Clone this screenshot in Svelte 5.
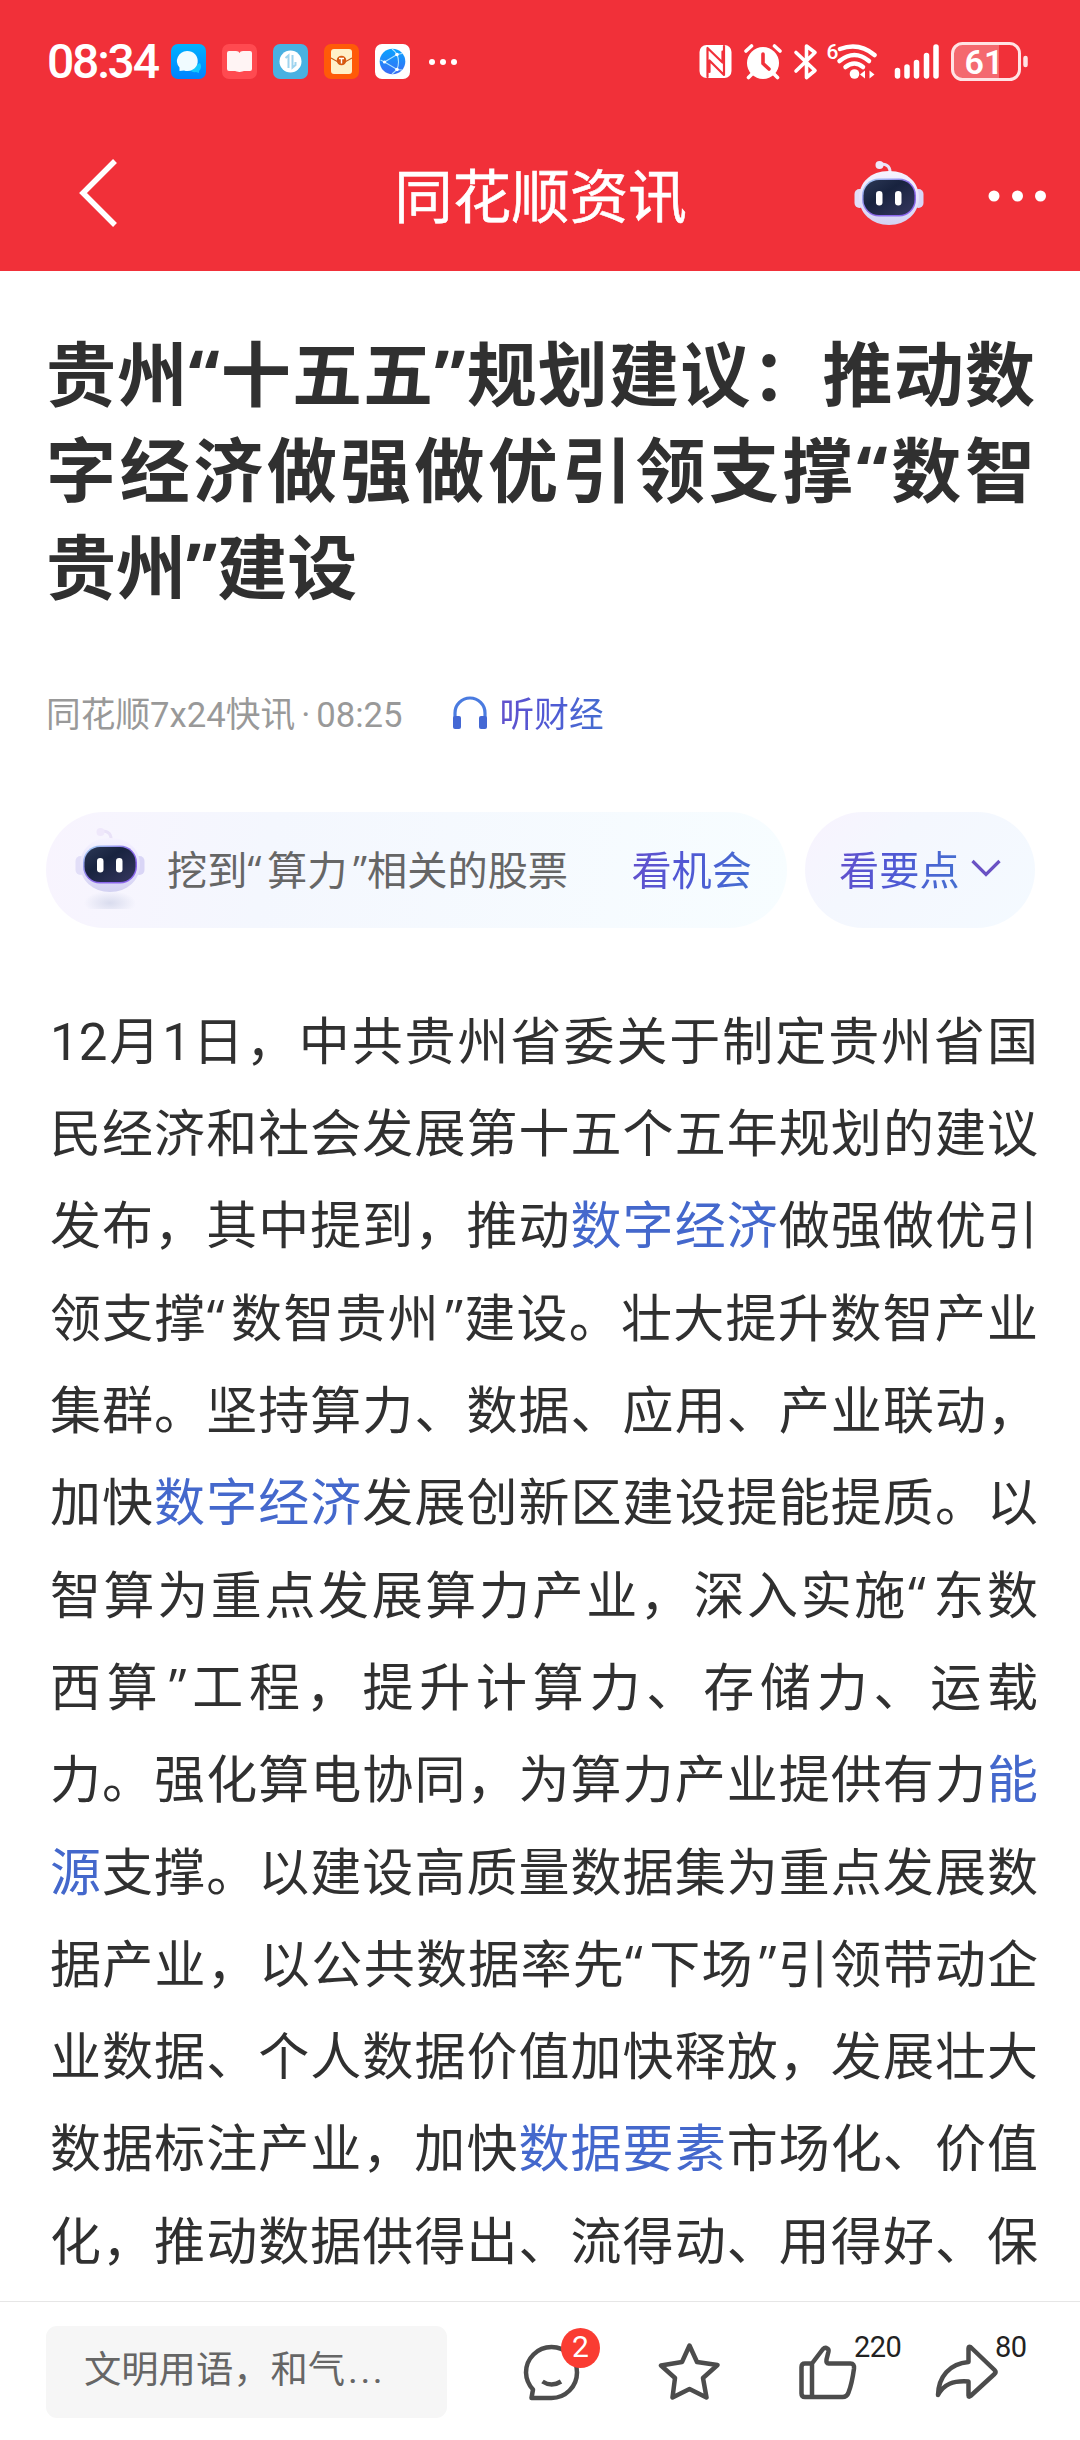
<script lang="ts">
	const title = ['贵州“十五五”规划建议：推动数', '字经济做强做优引领支撑“数智', '贵州”建设'];

	// [text] wrapped in brackets is a topic link
	const lines = [
		'12月1日，中共贵州省委关于制定贵州省国',
		'民经济和社会发展第十五个五年规划的建议',
		'发布，其中提到，推动[数字经济]做强做优引',
		'领支撑“数智贵州”建设。壮大提升数智产业',
		'集群。坚持算力、数据、应用、产业联动，',
		'加快[数字经济]发展创新区建设提能提质。以',
		'智算为重点发展算力产业，深入实施“东数',
		'西算”工程，提升计算力、存储力、运载',
		'力。强化算电协同，为算力产业提供有力[能]',
		'[源]支撑。以建设高质量数据集为重点发展数',
		'据产业，以公共数据率先“下场”引领带动企',
		'业数据、个人数据价值加快释放，发展壮大',
		'数据标注产业，加快[数据要素]市场化、价值',
		'化，推动数据供得出、流得动、用得好、保'
	];

	const parts = (line: string) => line.split(/[\[\]]/).map((text, i) => ({ text, link: i % 2 === 1 }));
</script>

{#snippet quoted(text: string)}
	{#each text.split(/([“”])/) as bit}{#if bit === '“'}<span class="open">“</span>{:else if bit === '”'}<span class="close">”</span>{:else}{bit}{/if}{/each}
{/snippet}

{#snippet robot(id: string)}
	<svg class="robot" viewBox="0 0 70 68" width="70" height="68">
		<defs>
			<linearGradient id="{id}-head" x1="0" y1="0" x2="0" y2="1">
				<stop offset="0" stop-color="#f6f3ff" />
				<stop offset="0.6" stop-color="#e3dffa" />
				<stop offset="1" stop-color="#d3d2f2" />
			</linearGradient>
			<linearGradient id="{id}-rim" x1="0" y1="0" x2="1" y2="1">
				<stop offset="0" stop-color="#a9dcf5" />
				<stop offset="0.5" stop-color="#8b6be8" />
				<stop offset="1" stop-color="#8a63ee" />
			</linearGradient>
			<linearGradient id="{id}-face" x1="0" y1="0" x2="1" y2="1">
				<stop offset="0" stop-color="#2c3856" />
				<stop offset="0.4" stop-color="#18233f" />
				<stop offset="1" stop-color="#36375f" />
			</linearGradient>
		</defs>
		<path d="M36 14q1-10-9-10" fill="none" stroke="#e9e2f8" stroke-width="3" />
		<circle cx="25.500" cy="5" r="4" fill="#efe8fb" />
		<rect x="0.500" y="29" width="10" height="19" rx="5" fill="#e2def8" />
		<rect x="59.500" y="29" width="10" height="19" rx="5" fill="#d9d5f6" />
		<path d="M35 11c19 0 30 12 30 27S52 65 35 65 5 53 5 38s11-27 30-27z" fill="url(#{id}-head)" />
		<rect x="8" y="18.500" width="54" height="38" rx="17" fill="url(#{id}-rim)" />
		<rect x="9.500" y="20" width="51" height="35" rx="15.500" fill="url(#{id}-face)" />
		<rect x="22" y="31" width="6.500" height="14.500" rx="3.200" fill="#fff" />
		<rect x="41" y="31" width="6.500" height="14.500" rx="3.200" fill="#fff" />
	</svg>
{/snippet}

<div class="page">
	<header>
		<div class="status">
			<span class="clock">08:34</span>
			<div class="apps">
				<svg viewBox="0 0 35 35">
					<defs>
						<linearGradient id="msg" x1="0" y1="0" x2="0" y2="1">
							<stop offset="0" stop-color="#00b2ff" />
							<stop offset="1" stop-color="#0082ff" />
						</linearGradient>
					</defs>
					<rect width="35" height="35" rx="7" fill="url(#msg)" />
					<path d="M29 19a6.500 6.500 0 0 1-1 8v2l-3-1a7 7 0 0 1-7-3z" fill="#12c8ff" />
					<path d="M16 7a10.500 10 0 1 1-3 19.500L8.500 27V23.500A10.500 10 0 0 1 16 7z" fill="#f0fbff" />
				</svg>
				<svg viewBox="0 0 35 35">
					<rect width="35" height="35" rx="7" fill="#ff4a50" />
					<path d="M5 9q0-2 2-2h7q3 0 3.500 2 .5-2 3.500-2h7q2 0 2 2v16q0 2-2 2h-6q-4 1-4.500 1t-4.500-1H7q-2 0-2-2z" fill="#fff4f4" />
				</svg>
				<svg viewBox="0 0 35 35">
					<rect width="35" height="35" rx="7" fill="#49b1e2" />
					<circle cx="17.500" cy="17.500" r="11" fill="#fff" />
					<path d="M12.500 14l3-2.500V24M19.500 11v12.500l3-2.500v-3" fill="none" stroke="#9fd4ee" stroke-width="2" />
				</svg>
				<svg viewBox="0 0 35 35">
					<rect width="35" height="35" rx="7" fill="#ff5a08" />
					<rect x="7" y="5" width="21" height="25" rx="3" fill="#fff0c8" />
					<path d="M7 14l7 4h7l7-4" fill="none" stroke="#c85a18" stroke-width="1.200" />
					<circle cx="17.500" cy="16.500" r="4.800" fill="#d85a10" />
					<path d="M15 14.500h5M17.500 14.500v5" stroke="#fff" stroke-width="1.400" />
				</svg>
				<svg viewBox="0 0 35 35">
					<defs>
						<linearGradient id="globe" x1="0" y1="0" x2="0" y2="1">
							<stop offset="0" stop-color="#08a4ff" />
							<stop offset="1" stop-color="#3b6cf4" />
						</linearGradient>
					</defs>
					<rect width="35" height="35" rx="7" fill="#fff" />
					<circle cx="17.500" cy="17.500" r="12.800" fill="url(#globe)" />
					<path d="M9.500 18 22 10.500q3 7 0 15zM17 5q3 2 5 5.500l5-1M9.500 18l-4-2M22 25.500 17 30M22 25.500l5 .5" fill="none" stroke="#aee4ff" stroke-width="1.100" />
					<g fill="#fff">
						<circle cx="9.500" cy="18" r="1.600" />
						<circle cx="22" cy="10.500" r="1.800" />
						<circle cx="22" cy="25.500" r="1.800" />
					</g>
				</svg>
				<svg class="more" viewBox="0 0 30 8" fill="#fff">
					<circle cx="4" cy="4" r="3" />
					<circle cx="15" cy="4" r="3" />
					<circle cx="26" cy="4" r="3" />
				</svg>
			</div>
			<svg class="system" width="334" height="44" viewBox="696 39 334 44" fill="none" stroke-linecap="round" stroke-linejoin="round">
				<rect x="699.500" y="44" width="32" height="33" rx="7" fill="#fff" />
				<path d="M707.500 76V47.500M707.500 47l15 14.500V50.500M724 45v29L709.500 59.500V71" stroke="#f13039" stroke-width="2.200" />
				<circle cx="763" cy="62" r="16" fill="#fff" />
				<path d="M746 50l5.500-5M774.500 45l5.500 5M752 73l-3.500 3.500M774 73l3.500 3.500" stroke="#fff" stroke-width="3.600" />
				<path d="M763 53v9.500l6 5.500" stroke="#f13039" stroke-width="3.600" />
				<path d="M796 51.500l19 18-8.500 7V45l8.500 6.500-19 18.500" stroke="#fff" stroke-width="3.600" />
				<g stroke="#fff" stroke-width="4.500">
					<path d="M840 48q19-7 34.500 6" />
					<path d="M839.500 60q15-12 29.500 0" />
					<path d="M845.500 66q9-7 17.500 0" />
				</g>
				<circle cx="854.500" cy="73" r="4.800" fill="#fff" />
				<path d="M860 73.500l5-4v8zM869.500 69.500l5 4-5 4z" fill="#fff" />
				<text x="826.500" y="58" class="band">6</text>
				<path d="M897.500 69.500v5.500M907 66v9M916.500 61.500V75M926.500 54.500V75M936 46v29" stroke="#fff" stroke-width="5.500" />
				<path d="M960 43h39v35h-39q-7 0-7-7V50q0-7 7-7z" fill="#f4696f" />
				<rect x="952.500" y="42.500" width="67" height="36" rx="10" stroke="#ffe3e4" stroke-width="3" />
				<path d="M1025.500 57v7" stroke="#ffe3e4" stroke-width="4.500" />
				<text x="984" y="72.500" text-anchor="middle" class="level">61</text>
			</svg>
		</div>
		<nav>
			<svg class="back" width="42" height="72" viewBox="0 0 42 72" fill="none" stroke="#fff" stroke-width="5.500">
				<path d="M38 4 6 36l32 32" />
			</svg>
			<h1>同花顺资讯</h1>
			<div class="actions">
				{@render robot('nav')}
				<svg class="dots" width="60" height="12" viewBox="0 0 60 12" fill="#fff">
					<circle cx="7" cy="6" r="5.500" />
					<circle cx="30.500" cy="6" r="5.500" />
					<circle cx="53.500" cy="6" r="5.500" />
				</svg>
			</div>
		</nav>
	</header>

	<main>
		<h2>
			{#each title as line}
				<span class="row">{@render quoted(line)}</span>
			{/each}
		</h2>

		<div class="meta">
			<span>同花顺7x24快讯<i>·</i>08:25</span>
			<svg width="36" height="34" viewBox="0 0 36 34" fill="none">
				<path d="M3 24V17a15 15 0 0 1 30 0v7" stroke="#4a7be0" stroke-width="3.200" />
				<rect x="1" y="20" width="8" height="13" rx="2" fill="#4468d4" />
				<rect x="27" y="20" width="8" height="13" rx="2" fill="#4468d4" />
			</svg>
			<span class="tint">听财经</span>
		</div>

		<div class="pills">
			<div class="pill wide">
				<div class="bot">{@render robot('pill')}</div>
				<span class="hint">{@render quoted('挖到“算力”相关的股票')}</span>
				<span class="tint">看机会</span>
			</div>
			<div class="pill">
				<span class="tint">看要点</span>
				<svg width="30" height="18" viewBox="0 0 30 18" fill="none" stroke="#6a52c4" stroke-width="3.200">
					<path d="M1.500 2 15 15.500 28.500 2" />
				</svg>
			</div>
		</div>

		<article>
			{#each lines as line}
				<p>
					{#each parts(line) as part}{#if part.link}<a href="#topic">{part.text}</a>{:else}{@render quoted(part.text)}{/if}{/each}
				</p>
			{/each}
		</article>
	</main>

	<footer>
		<div class="input">文明用语，和气<b>...</b></div>
		<div class="tool comment">
			<svg width="60" height="60" viewBox="522 2342 60 60">
				<path d="M551.500 2347a25.500 25.500 0 0 1 0 51h-20l1.500-8.500a26 26 0 0 1-7-17 25.500 25.500 0 0 1 25.500-25.500z" />
				<path d="M542.500 2381.500q9 6 18.500 0" />
			</svg>
			<span class="badge">2</span>
		</div>
		<div class="tool star">
			<svg width="64" height="60" viewBox="658 2342 64 60">
				<path d="M689.500 2345.500l7.500 16.500 20.500 3-14.500 13 3.500 19.500-17-8.500-17 8.500 2.500-19.500-14-12.500 21-3.500z" />
			</svg>
		</div>
		<div class="tool like">
			<svg width="62" height="60" viewBox="798 2342 62 60">
				<path d="M812 2363.500h-7q-3.500 0-3.500 3.500v26.500q0 3.500 3.500 3.500h37.500q4.500 0 6-4.500 3.500-9 5.500-24 .5-5-3.500-5h-22q-2.500 0-2-4l2-8q.5-2.500-2-3.500-2-.5-3.500 1zM812 2363.500V2397" />
			</svg>
			<span class="count">220</span>
		</div>
		<div class="tool share">
			<svg width="66" height="60" viewBox="935 2342 66 60">
				<path d="M968.500 2348.500v13.500c-19 1.500-30 15-30.500 33 6-11 15-14.500 30.500-13.500v14q0 2 2 .5l24-22q2-2 0-4l-24-23q-2-1-2 1.500z" />
			</svg>
			<span class="count">80</span>
		</div>
	</footer>
</div>

<style>
	:global(body) {
		margin: 0;
		background: #fff;
	}

	.page {
		width: 1080px;
		height: 2440px;
		display: flex;
		flex-direction: column;
		overflow: hidden;
		background: #fff;
		color: #303030;
		font-family: Roboto, "Noto Sans CJK SC", sans-serif;
		text-spacing-trim: space-all;
	}

	svg {
		display: block;
		flex-shrink: 0;
	}

	/* curly quotes sit in a half-width cell */
	.open,
	.close {
		font-family: "Open Sans", "Noto Sans", sans-serif;
		line-height: 1;
	}

	.open {
		padding-right: 0.1em;
	}

	.close {
		padding-left: 0.1em;
	}

	header {
		height: 271px;
		background: #f13039;
		color: #fff;
	}

	.status {
		display: flex;
		align-items: center;
		height: 123px;
		padding: 0 50px 0 47px;
	}

	.clock {
		width: 124px;
		font-size: 48px;
		font-weight: 500;
		letter-spacing: -2.200px;
	}

	.apps {
		display: flex;
		align-items: center;
		gap: 16px;
	}

	.apps svg {
		width: 35px;
		height: 35px;
	}

	.apps .more {
		width: 30px;
		height: 8px;
		margin-left: 2px;
	}

	.system {
		margin-left: auto;
	}

	.band {
		fill: #fff;
		font-size: 21px;
		font-weight: 500;
	}

	.level {
		fill: #fff;
		font-size: 34px;
		font-weight: 600;
	}

	nav {
		display: grid;
		grid-template-columns: 1fr auto 1fr;
		align-items: center;
		height: 148px;
		padding: 0 33px 0 77px;
	}

	.back {
		margin: -8px 0 0;
	}

	h1 {
		margin: 2px 43px 0 0;
		font-size: 58.500px;
		font-weight: 400;
		line-height: 80px;
		-webkit-text-stroke: 0.600px #fff;
	}

	.actions {
		display: flex;
		align-items: center;
		justify-content: flex-end;
		gap: 63px;
	}

	.actions .robot {
		margin-top: -6px;
	}

	.dots {
		margin-top: -3px;
	}

	main {
		flex: 1;
		min-height: 0;
		padding: 58px 45px 0 46px;
		overflow: hidden;
	}

	h2 {
		margin: 0;
		font-size: 70px;
		font-weight: 700;
		line-height: 96.300px;
	}

	h2 .open,
	h2 .close {
		padding: 0;
	}

	.row {
		display: block;
		white-space: nowrap;
		text-align: justify;
		text-align-last: justify;
	}

	.row:last-child {
		text-align-last: left;
	}

	.meta {
		display: flex;
		align-items: center;
		height: 50px;
		margin-top: 69px;
		font-size: 34.700px;
		color: #999;
	}

	.meta i {
		margin: 0 6px;
		font-style: normal;
	}

	.meta svg {
		margin: 2px 12px 0 49px;
	}

	.tint {
		background: linear-gradient(100deg, #6350cc, #5058d4 45%, #4470d0);
		background-clip: text;
		color: transparent;
	}

	.pills {
		display: flex;
		gap: 18px;
		margin-top: 75px;
		font-size: 40.200px;
	}

	.pill {
		box-sizing: border-box;
		display: flex;
		align-items: center;
		width: 230px;
		height: 116px;
		padding: 0 34px 4px 34px;
		border-radius: 58px;
		background: linear-gradient(135deg, #f8f3fe, #f4f7fe 35%, #f4faff);
		justify-content: space-between;
		white-space: nowrap;
	}

	.pill.wide {
		width: 741px;
		padding-left: 29px;
		padding-right: 35px;
		background: linear-gradient(100deg, #f8f4fe, #f4f7fe 30%, #f7fdff);
	}

	.bot {
		padding-bottom: 14px;
		background: radial-gradient(ellipse 26px 12px at 50% 76px, #d9dcee, transparent);
	}

	.hint {
		margin: 0 auto 0 22px;
		color: #666;
	}

	.hint .open {
		padding-right: 0.14em;
	}

	.hint .close {
		padding-left: 0.14em;
	}

	article {
		margin: 69px -3px 0 4px;
		font-size: 51px;
		line-height: 92.300px;
	}

	p {
		height: 92.300px;
		margin: 0;
		white-space: nowrap;
		text-align: justify;
		text-align-last: justify;
	}

	a {
		color: #4468cc;
		text-decoration: none;
	}

	footer {
		box-sizing: border-box;
		display: flex;
		height: 139px;
		padding: 24px 46px 0;
		border-top: 1px solid #e6e6e6;
	}

	.input {
		box-sizing: border-box;
		width: 401px;
		height: 92px;
		padding-left: 38px;
		border-radius: 11px;
		background: #f6f6f6;
		color: #666;
		font-size: 37.300px;
		line-height: 89px;
	}

	b {
		margin-left: 3px;
		font-weight: 400;
		letter-spacing: 2.500px;
	}

	.tool {
		position: relative;
		margin-top: 16px;
	}

	.tool path {
		fill: none;
		stroke: #4c4c4c;
		stroke-width: 4.500;
		stroke-linejoin: round;
	}

	.comment {
		margin-left: 75px;
	}

	.star {
		margin-left: 76px;
	}

	.like {
		margin-left: 76px;
	}

	.share {
		margin-left: 75px;
	}

	.badge {
		position: absolute;
		left: 39px;
		top: -14px;
		width: 39px;
		height: 40px;
		border-radius: 50%;
		background: #fa3c32;
		color: #fff;
		font-size: 30px;
		line-height: 38px;
		text-align: center;
	}

	.count {
		position: absolute;
		left: 56px;
		top: -12px;
		font-size: 29px;
		line-height: 34px;
		color: #222;
		letter-spacing: -0.500px;
	}

	.share .count {
		left: 60px;
	}
</style>
